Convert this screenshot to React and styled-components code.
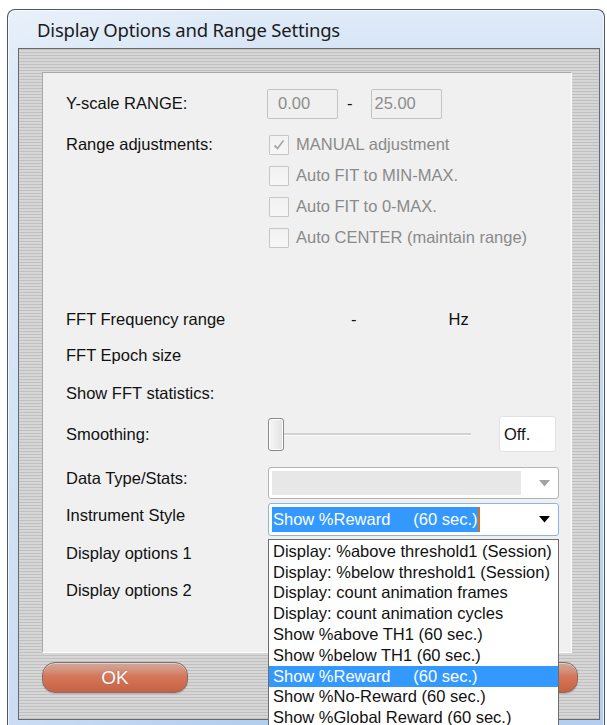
import React from 'react';
import styled, { createGlobalStyle } from 'styled-components';

const GlobalStyle = createGlobalStyle`
  html, body { margin: 0; padding: 0; background: #ffffff; overflow: hidden; }
  body { font-family: "Liberation Sans", Arial, sans-serif; }
  #root { width: 607px; height: 725px; overflow: hidden; }
`;

const Page = styled.div`
  width: 607px;
  height: 725px;
  padding: 9px 0 0 7px;
  box-sizing: border-box;
  overflow: hidden;
`;

const Window = styled.div`
  width: 598px;
  height: 740px;
  box-sizing: border-box;
  border: 1px solid #4d5866;
  border-bottom: none;
  border-radius: 8px 8px 0 0;
  padding: 0 4px 0 10px;
  display: flex;
  flex-direction: column;
  background:
    linear-gradient(to right, rgba(255,255,255,0.3), rgba(255,255,255,0) 40%),
    linear-gradient(to bottom, #e0ebf8 0px, #d2e2f5 60px, #c3d8f1 400px, #b3cdee 740px);
  box-shadow: inset 0 0 0 1px rgba(255,255,255,0.7);
`;

const TitleBar = styled.div`
  height: 38px;
  display: flex;
  align-items: center;
  padding-left: 19px;
  font-family: "Noto Sans", "Open Sans", sans-serif;
  font-size: 18.5px;
  color: #1b1b1b;
  letter-spacing: -0.2px;
`;

const Client = styled.div`
  height: 672px;
  box-sizing: border-box;
  border: 1px solid #666a6e;
  padding: 23px 27px 0 23px;
  background: repeating-linear-gradient(
    to bottom,
    #c0c0c0 0px,
    #c0c0c0 1px,
    #d6d6d6 1px,
    #d6d6d6 3px
  );
`;

const Panel = styled.div`
  height: 581px;
  box-sizing: border-box;
  background: #f0f0f0;
  border-top: 1px solid #a9a9a9;
  border-left: 1px solid #a9a9a9;
  border-right: 1px solid #ffffff;
  border-bottom: 1px solid #ffffff;
  padding: 15px 0 0 23px;
  display: flex;
  flex-direction: column;
`;

const Row = styled.div`
  display: flex;
  align-items: ${p => (p.$top ? 'flex-start' : 'center')};
  height: ${p => p.$h}px;
  margin-top: ${p => p.$mt || 0}px;
  flex-shrink: 0;
`;

const Label = styled.div`
  width: 201px;
  flex-shrink: 0;
  font-size: 16.5px;
  color: #111;
  line-height: ${p => (p.$lh ? `${p.$lh}px` : 'normal')};
  padding-bottom: ${p => (p.$lift || 0) * 2}px;
  white-space: nowrap;
`;

const Text = styled.span`
  font-size: 16.5px;
  color: ${p => (p.$dim ? '#8a8a8a' : '#111')};
  white-space: pre;
`;

const Field = styled.div`
  width: 71px;
  height: 30px;
  box-sizing: border-box;
  border: 1px solid #c3c3c3;
  border-radius: 2px;
  background: #f0f0f0;
  display: flex;
  align-items: center;
  padding-left: ${p => p.$indent}px;
  font-size: 16.5px;
  color: #8d8d8d;
`;

const RangeDash = styled.span`
  font-size: 16.5px;
  color: #111;
  margin: 0 18px 0 9px;
`;

const CheckList = styled.div`
  display: flex;
  flex-direction: column;
`;

const CheckRow = styled.div`
  height: 31px;
  display: flex;
  align-items: center;
  padding-left: 2px;
  gap: 7px;
`;

const Box = styled.div`
  width: 20px;
  height: 20px;
  box-sizing: border-box;
  border: 1px solid #c6c6c6;
  border-radius: 1px;
  background: linear-gradient(#f1f1f1, #f7f7f7);
  display: flex;
  align-items: center;
  justify-content: center;
`;

const FreqControl = styled.div`
  display: flex;
  align-items: center;
`;

const FreqDash = styled.span`
  font-size: 16.5px;
  color: #111;
  margin-left: 84px;
`;

const Unit = styled.span`
  font-size: 16.5px;
  color: #111;
  margin-left: 92px;
`;

const SliderWrap = styled.div`
  display: flex;
  align-items: center;
  width: 204px;
  height: 36px;
`;

const Thumb = styled.div`
  width: 16px;
  height: 33px;
  box-sizing: border-box;
  margin-left: 1px;
  border: 1px solid #8a8a8a;
  border-radius: 3px;
  background: linear-gradient(to right, #f6f6f6, #e2e2e2);
  box-shadow: inset 0 0 0 1px #ffffff;
  flex-shrink: 0;
`;

const Track = styled.div`
  flex: 1;
  height: 2px;
  background: #d3d3d3;
  border-bottom: 1px solid #fbfbfb;
`;

const ValueBox = styled.div`
  width: 57px;
  height: 36px;
  box-sizing: border-box;
  margin-left: 28px;
  border: 1px solid #e2e2e2;
  border-radius: 3px;
  background: #ffffff;
  display: flex;
  align-items: center;
  padding-left: 4px;
  font-size: 16.5px;
  color: #111;
`;

const ComboWrap = styled.div`
  position: relative;
  margin-left: 1px;
`;

const Combo = styled.div`
  width: 291px;
  height: ${p => p.$h}px;
  box-sizing: border-box;
  border: 1px solid ${p => (p.$focus ? '#86b6e8' : '#b3b3b3')};
  border-radius: 3px;
  background: #ffffff;
  display: flex;
  align-items: center;
  padding: 3px 8px 3px 3px;
  gap: 8px;
`;

const ComboField = styled.div`
  flex: 1;
  align-self: stretch;
  display: flex;
  align-items: center;
  background: ${p => (p.$disabled ? '#e7e7e7' : 'transparent')};
  margin-right: ${p => (p.$disabled ? 10 : 0)}px;
`;

const Selection = styled.span`
  height: 100%;
  display: flex;
  align-items: center;
  padding-left: 1px;
  background: #3399ff;
  color: #ffffff;
  font-size: 16.5px;
  white-space: pre;
  border-right: 2px solid #d4731f;
`;

const Arrow = ({ color }) => (
  <svg width="11" height="7" viewBox="0 0 11 7">
    <polygon points="0,0 11,0 5.5,6.5" fill={color} />
  </svg>
);

const DropList = styled.div`
  position: absolute;
  top: 36px;
  left: 0;
  width: 291px;
  box-sizing: border-box;
  border: 1px solid #6e6e6e;
  background: #ffffff;
  padding: 1px 0 0 0;
  z-index: 5;
`;

const Option = styled.div`
  height: 20.8px;
  display: flex;
  align-items: center;
  padding-left: 4px;
  font-size: 16.5px;
  white-space: pre;
  color: ${p => (p.$active ? '#ffffff' : '#111')};
  background: ${p => (p.$active ? '#3399ff' : 'transparent')};
`;

const ButtonRow = styled.div`
  display: flex;
  justify-content: space-between;
  margin-top: 9px;
  margin-right: -6px;
`;

const Button = styled.div`
  width: 146px;
  height: 31px;
  box-sizing: border-box;
  border: 1px solid #8c6a62;
  border-radius: 13px;
  display: flex;
  align-items: center;
  justify-content: center;
  font-size: 19px;
  color: #ffffff;
  text-shadow: 0 0 1px rgba(120, 40, 20, 0.5);
  background: linear-gradient(
    to bottom,
    #c7aaa3 0%,
    #d59580 22%,
    #d4785c 45%,
    #cf6b4d 75%,
    #c46245 100%
  );
  box-shadow: inset 0 1px 0 rgba(255,255,255,0.45), 0 1px 1px rgba(0,0,0,0.15);
`;

const options = [
  'Display: %above threshold1 (Session)',
  'Display: %below threshold1 (Session)',
  'Display: count animation frames',
  'Display: count animation cycles',
  'Show %above TH1 (60 sec.)',
  'Show %below TH1 (60 sec.)',
  'Show %Reward     (60 sec.)',
  'Show %No-Reward (60 sec.)',
  'Show %Global Reward (60 sec.)',
];

const checks = [
  { text: 'MANUAL adjustment', checked: true },
  { text: 'Auto FIT to MIN-MAX.' },
  { text: 'Auto FIT to 0-MAX.' },
  { text: 'Auto CENTER (maintain range)' },
];

export default function App() {
  return (
    <>
      <GlobalStyle />
      <Page>
        <Window>
          <TitleBar>Display Options and Range Settings</TitleBar>
          <Client>
            <Panel>
              <Row $h={31}>
                <Label>Y-scale RANGE:</Label>
                <Field $indent={10}>0.00</Field>
                <RangeDash>-</RangeDash>
                <Field $indent={3}>25.00</Field>
              </Row>

              <Row $h={124} $mt={10} $top>
                <Label $lh={31}>Range adjustments:</Label>
                <CheckList>
                  {checks.map(c => (
                    <CheckRow key={c.text}>
                      <Box>
                        {c.checked && (
                          <svg width="14" height="14" viewBox="0 0 14 14">
                            <path d="M2.5 7.5 L5.5 10.5 L11.5 2.5" fill="none" stroke="#a8a8a8" strokeWidth="1.8" />
                          </svg>
                        )}
                      </Box>
                      <Text $dim>{c.text}</Text>
                    </CheckRow>
                  ))}
                </CheckList>
              </Row>

              <Row $h={32} $mt={50}>
                <Label>FFT Frequency range</Label>
                <FreqControl>
                  <FreqDash>-</FreqDash>
                  <Unit>Hz</Unit>
                </FreqControl>
              </Row>

              <Row $h={32} $mt={4}>
                <Label>FFT Epoch size</Label>
              </Row>

              <Row $h={32} $mt={6}>
                <Label>Show FFT statistics:</Label>
              </Row>

              <Row $h={36} $mt={7}>
                <Label>Smoothing:</Label>
                <SliderWrap>
                  <Thumb />
                  <Track />
                </SliderWrap>
                <ValueBox>Off.</ValueBox>
              </Row>

              <Row $h={32} $mt={15}>
                <Label $lift={5}>Data Type/Stats:</Label>
                <ComboWrap>
                  <Combo $h={32}>
                    <ComboField $disabled />
                    <Arrow color="#a3a3a3" />
                  </Combo>
                </ComboWrap>
              </Row>

              <Row $h={33} $mt={4}>
                <Label $lift={4}>Instrument Style</Label>
                <ComboWrap>
                  <Combo $h={33} $focus>
                    <ComboField>
                      <Selection>{'Show %Reward     (60 sec.)'}</Selection>
                    </ComboField>
                    <Arrow color="#000000" />
                  </Combo>
                  <DropList>
                    {options.map((o, i) => (
                      <Option key={o} $active={i === 6}>{o}</Option>
                    ))}
                  </DropList>
                </ComboWrap>
              </Row>

              <Row $h={32} $mt={1}>
                <Label>Display options 1</Label>
              </Row>

              <Row $h={32} $mt={5}>
                <Label>Display options 2</Label>
              </Row>
            </Panel>
            <ButtonRow>
              <Button>OK</Button>
              <Button>Cancel</Button>
            </ButtonRow>
          </Client>
        </Window>
      </Page>
    </>
  );
}
